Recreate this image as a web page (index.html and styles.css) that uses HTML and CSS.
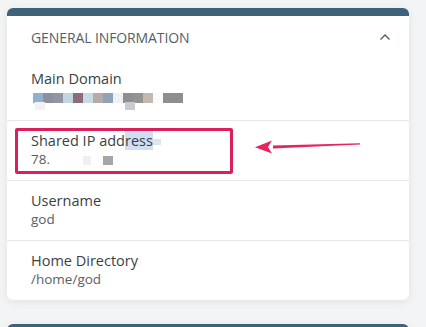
FILE: index.html
```html
<!DOCTYPE html>
<html lang="en">
<head>
  <meta charset="UTF-8" />
  <meta name="viewport" content="width=device-width, initial-scale=1" />
  <title>General Information</title>
  <link rel="stylesheet" href="styles.css">
</head>
<body>
  <div class="panel">
    <div class="panel-head">
      <h3>General Information</h3>
      <svg class="chevron" width="12" height="8" viewBox="0 0 12 8">
        <path d="M1.5 6.5 L6 2 L10.5 6.5" fill="none" stroke="#555e68" stroke-width="1.4"/>
      </svg>
    </div>

    <div class="row first">
      <div class="label">Main Domain</div>
      <div class="value mosaic">
        <span style="background:#8fb1cf"></span><span style="background:#8c8f9c"></span><span style="background:#9296a1"></span><span style="background:#c3d5de"></span><span style="background:#8c6b7a"></span><span style="background:#c7dbe3"></span><span style="background:#b7aba7"></span><span style="background:#8ea3ba"></span><span style="background:#eff1f4"></span><span style="background:#8f8e92"></span><span style="background:#97948f"></span><span style="background:#c4b9b0"></span><span style="background:#fbfbfb"></span><span style="background:#8e8e8e"></span><span style="background:#8e8e8e"></span>
      </div>
      <div class="mosaic under">
        <span style="background:#f1f1f3"></span><span></span><span></span><span></span><span></span><span></span><span></span><span></span><span></span><span style="background:#cbcbcb"></span>
      </div>
    </div>

    <div class="row marked">
      <div class="label">Shared IP add<span class="sel">ress</span><span class="smudge"></span></div>
      <div class="value">78.<span class="blot light"></span><span class="blot dark"></span></div>
      <div class="highlight"></div>
      <svg class="arrow" width="110" height="18" viewBox="0 0 110 18">
        <path d="M107 5.2 L20 7.6 L20 10.6 L107 6.6 Z" fill="#e8245f"/>
        <path d="M2 9.2 L19 2.5 L15 9 L19 15.5 Z" fill="#e8245f"/>
      </svg>
    </div>

    <div class="row">
      <div class="label">Username</div>
      <div class="value">god</div>
    </div>

    <div class="row">
      <div class="label">Home Directory</div>
      <div class="value">/home/god</div>
    </div>
  </div>

  <div class="panel next"></div>
</body>
</html>
```

FILE: styles.css
```css
body {
  font-family: "Open Sans", "Noto Sans", sans-serif;
  background: #f3f4f6;
  margin: 0;
  padding: 8px 17px 0 7px;
  overflow: hidden;
}
.panel {
  background: #fff;
  border-top: 8px solid #3d6279;
  border-radius: 6px;
  box-shadow: 0 2px 8px rgba(0,0,0,0.08);
}
.panel.next {
  margin-top: 24px;
  height: 20px;
}
.panel-head {
  display: flex;
  align-items: center;
  justify-content: space-between;
  height: 43px;
  padding: 0 18px 0 24px;
}
.panel-head h3 {
  margin: 0;
  font-size: 14px;
  font-weight: 400;
  text-transform: uppercase;
  color: #555e68;
  letter-spacing: -0.1px;
}
.chevron {
  margin-top: -2px;
}
.row {
  position: relative;
  padding: 10px 24px 11px;
  border-bottom: 1px solid #e6e8ea;
}
.row.first {
  padding-bottom: 13px;
}
.row:last-child {
  border-bottom: none;
}
.label {
  font-size: 14.5px;
  line-height: 19px;
  color: #3a3f45;
}
.value {
  font-size: 13.5px;
  line-height: 19px;
  color: #5a6066;
}
.mosaic {
  display: flex;
  height: 19px;
  align-items: center;
  margin-left: 2px;
}
.mosaic span {
  display: block;
  width: 10px;
  height: 10px;
}
.mosaic.under {
  position: absolute;
  left: 26px;
  top: 43px;
  height: 8px;
}
.mosaic.under span {
  height: 8px;
}
.sel {
  background: rgba(120,160,220,0.35);
}
.smudge {
  display: inline-block;
  width: 8px;
  height: 6px;
  background: #dfe4ec;
  vertical-align: middle;
}
.blot {
  display: inline-block;
  width: 8px;
  height: 9px;
  vertical-align: middle;
}
.blot.light {
  background: #efefef;
  margin-left: 33px;
}
.blot.dark {
  width: 10px;
  background: #a6a6a6;
  margin-left: 12px;
}
.highlight {
  position: absolute;
  left: 8px;
  top: 7px;
  width: 212px;
  height: 40px;
  border: 3px solid #dc1f5a;
  border-radius: 2px;
}
.arrow {
  position: absolute;
  left: 246px;
  top: 17px;
}
```
